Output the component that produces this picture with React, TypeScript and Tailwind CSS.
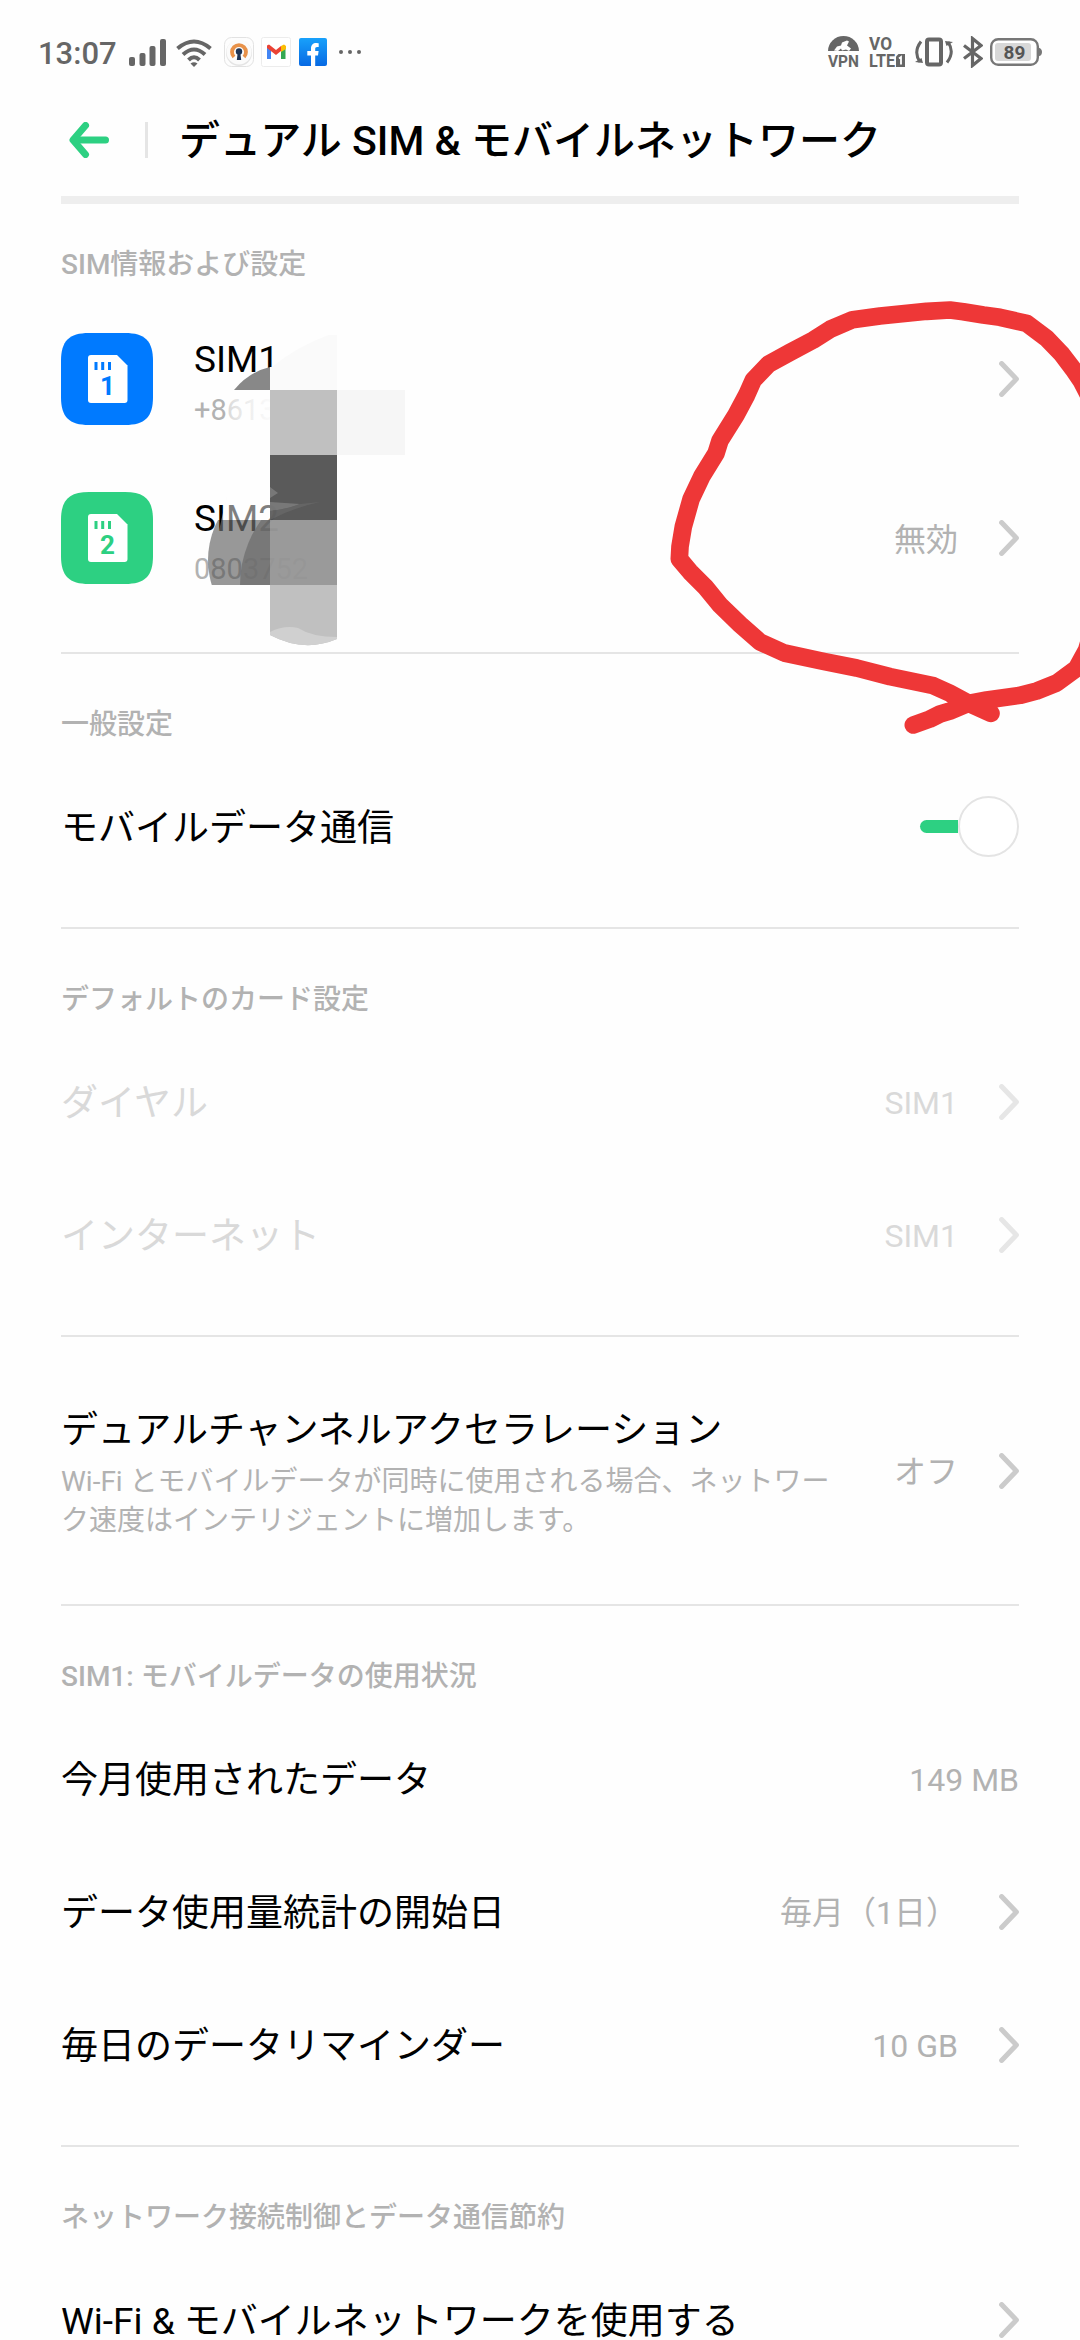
import type { ReactNode } from "react"
import { clsx } from "clsx"

function Chevron({ disabled = false }: { disabled?: boolean }) {
  return (
    <svg
      viewBox="0 0 20 36"
      className={clsx("w-5 h-9 shrink-0", disabled ? "stroke-[#e6e6e6]" : "stroke-[#cbcbcb]")}
      fill="none"
      strokeWidth="5"
      strokeLinecap="round"
      strokeLinejoin="round"
    >
      <path d="M2.6 2.6 17.4 18 2.6 33.4" />
    </svg>
  )
}

function Divider() {
  return <div className="h-0.5 bg-[#e5e5e5]" />
}

function SectionTitle({ children }: { children: ReactNode }) {
  return (
    <div className="h-[106px] pt-[51px]">
      <h2 className="text-[28px] leading-10 font-medium text-[#b2b2b2]">{children}</h2>
    </div>
  )
}

type RowProps = {
  label: string
  value?: string
  arrow?: boolean
  disabled?: boolean
}

function Row({ label, value, arrow = true, disabled = false }: RowProps) {
  return (
    <div className="h-[133px] flex items-center justify-between">
      <span className={clsx("text-[37px] leading-[54px] pt-1", disabled ? "text-[#d9d9d9]" : "text-black")}>
        {label}
      </span>
      <div className="flex items-center gap-[41px]">
        {value && (
          <span className={clsx("text-[32px] leading-[46px] pt-0.5", disabled ? "text-[#d9d9d9]" : "text-[#b2b2b2]")}>
            {value}
          </span>
        )}
        {arrow && <Chevron disabled={disabled} />}
      </div>
    </div>
  )
}

function SimIcon({ slot, color }: { slot: number; color: string }) {
  return (
    <svg viewBox="0 0 92 92" className="w-[92px] h-[92px] shrink-0">
      <path
        fill={color}
        d="M0 46V28C0 8 8 0 28 0H64C84 0 92 8 92 28V64C92 84 84 92 64 92H28C8 92 0 84 0 64Z"
      />
      <path fill="#fff" d="M30 22H56L66.5 32.5V67a3 3 0 0 1-3 3H30a3 3 0 0 1-3-3V25a3 3 0 0 1 3-3Z" />
      <path stroke={color} strokeWidth="3" d="M35 29v8M41.700 29v8M48.500 29v8" />
      <text x="46.500" y="61.500" textAnchor="middle" fill={color} fontSize="26" fontWeight="700" fontFamily="Roboto">
        {slot}
      </text>
    </svg>
  )
}

type SimRowProps = {
  slot: number
  name: string
  phone: string
  color: string
  status?: string
}

function SimRow({ slot, name, phone, color, status }: SimRowProps) {
  return (
    <div className="h-[159px] flex items-center">
      <SimIcon slot={slot} color={color} />
      <div className="ml-[41px] grow pt-2">
        <p className="text-[37px] leading-[54px] text-black">{name}</p>
        <p className="text-[29px] leading-[46px] text-[#b2b2b2]">{phone}</p>
      </div>
      <div className="flex items-center gap-[41px] pt-px">
        {status && <span className="text-[32px] leading-[46px] pt-[3px] text-[#b2b2b2]">{status}</span>}
        <Chevron />
      </div>
    </div>
  )
}

function StatusBar() {
  return (
    <div className="h-[104px] px-[38px] flex items-center justify-between text-[#666]">
      <div className="flex items-center">
        <span className="w-[91px] text-[31px] leading-9 font-medium pt-[3px]">13:07</span>
        <svg viewBox="0 0 38 28" className="w-[38px] h-7 mt-px" fill="#666">
          <rect x="0" y="18" width="6" height="9" rx="2" />
          <rect x="10.500" y="14" width="6" height="13" rx="2" />
          <rect x="20.500" y="7" width="6" height="20" rx="2" />
          <rect x="31" y="0" width="6" height="27" rx="2" />
        </svg>
        <svg viewBox="0 0 36 28" className="w-9 h-7 ml-[9px] mt-px" fill="none" stroke="#666" strokeWidth="4">
          <path d="M1.500 9.500Q18-4.500 34.500 9.500" />
          <path d="M7 15.500Q18 5.500 29 15.500" />
          <path d="M12.500 21Q18 15.500 23.500 21" />
          <path d="M14.500 24.500Q18 22 21.500 24.500L18 28Z" fill="#666" stroke="none" />
        </svg>

        {/* OpenVPN */}
        <svg viewBox="0 0 30 30" className="w-[30px] h-[30px] ml-3" fill="none">
          <rect x=".5" y=".5" width="29" height="29" rx="7" stroke="#e2e2e2" fill="#fdfdfd" />
          <circle cx="15" cy="16" r="13" fill="#e4e4e4" />
          <circle cx="15" cy="15" r="12.500" fill="#fbfbfb" />
          <path d="M10 20A7 7 0 1 1 20 20" stroke="#e8924a" strokeWidth="3.800" />
          <circle cx="15" cy="14.500" r="3.200" fill="#1d3557" />
          <path d="M13.800 15h2.400l1 8h-4.400z" fill="#1d3557" />
        </svg>

        {/* Gmail */}
        <svg viewBox="0 0 30 30" className="w-[30px] h-[30px] ml-[7px]">
          <rect x=".5" y=".5" width="29" height="29" rx="2" fill="#fff" stroke="#ececec" />
          <path d="M6 9v13h4V12z" fill="#4285f4" />
          <path d="M20 12v10h4.500V9z" fill="#34a853" />
          <path d="M6 8.500 8 7.500 15 13l5-4v5l-5 4-9-7z" fill="#ea4335" />
          <path d="M20 9l3-1.500 2 1.500v3l-5 3z" fill="#fbbc04" />
        </svg>

        {/* Facebook */}
        <svg viewBox="0 0 28 28" className="w-7 h-7 ml-2">
          <defs>
            <linearGradient id="fb" x1="0" y1="0" x2="0" y2="1">
              <stop offset="0" stopColor="#18a1fb" />
              <stop offset="1" stopColor="#0769e3" />
            </linearGradient>
          </defs>
          <rect width="28" height="28" rx="2" fill="url(#fb)" />
          <path
            d="M12 28V17.500H8.300V13H12v-2.500C12 7 14 5 17.200 5c1.200 0 2.500.3 2.500.3v3.600h-1.600c-1.400 0-1.900.8-1.900 1.800V13h3.400l-.6 4.500h-2.800V28z"
            fill="#fff"
          />
        </svg>

        <svg viewBox="0 0 24 6" className="w-6 h-1.5 ml-[11px]" fill="#666">
          <circle cx="3" cy="3" r="2" />
          <circle cx="12" cy="3" r="2" />
          <circle cx="21" cy="3" r="2" />
        </svg>
      </div>

      <div className="flex items-center">
        <svg viewBox="0 0 32 32" className="w-8 h-8 mr-[9px] overflow-visible">
          <path d="M0 15a15.500 15 0 0 1 31 0z" fill="#666" />
          <path d="M6 14.500l3-4 4-1 1-3 5-2 2 1-2 4 4 3-2 2.500-3-1.500-4 1-1-2-3 2.500z" fill="#fff" />
          <text
            x="0"
            y="30.500"
            fill="#666"
            fontSize="16.500"
            fontWeight="700"
            fontFamily="Roboto"
            textLength="31"
            lengthAdjust="spacingAndGlyphs"
          >
            VPN
          </text>
        </svg>
        <svg viewBox="0 0 36 32" className="w-9 h-8 mr-[10px] overflow-visible">
          <g fill="#666" fontSize="18" fontWeight="700" fontFamily="Roboto">
            <text x="0" y="14" textLength="23" lengthAdjust="spacingAndGlyphs">VO</text>
            <text x="0" y="31" textLength="26" lengthAdjust="spacingAndGlyphs">LTE</text>
          </g>
          <path d="M29.500 18H36v13h-9V20.500z" fill="#666" />
          <path d="M30 22.500l2-1.500v7.500" fill="none" stroke="#fff" strokeWidth="1.800" />
        </svg>
        <svg viewBox="0 0 38 30" className="w-[38px] h-[30px] mr-[10px]" fill="none" stroke="#666" strokeWidth="3">
          <rect x="12" y="2.500" width="14" height="25" rx="2" strokeWidth="4" />
          <path d="M6 4.500Q-2 15 5 25M32 25.500Q40 15 33 5" />
          <path d="M0 25l8 1-1.500-5zM38 5l-8-1 1.500 5z" fill="#666" stroke="none" />
        </svg>
        <svg viewBox="0 0 20 32" className="w-5 h-8 mr-[7px]" fill="none" stroke="#666" strokeWidth="3.200">
          <path d="M1 9.500 18 22.500 9.500 29.500V2.500L18 9.500 1 22.500" />
        </svg>
        <svg viewBox="0 0 52 28" className="w-[52px] h-7">
          <rect x="1.200" y="1.200" width="46.600" height="25.600" rx="7" fill="#fff" stroke="#777" strokeWidth="2.400" />
          <path d="M48.500 9.500q3.500 1 3.500 4.500t-3.500 4.500z" fill="#777" />
          <rect x="5" y="5" width="36" height="18" rx="3" fill="#d8d8d8" />
          <text x="24.500" y="21" textAnchor="middle" fill="#555" fontSize="19" fontWeight="700" fontFamily="Roboto">
            89
          </text>
        </svg>
      </div>
    </div>
  )
}

// Mosaic brush that hides the phone numbers
function Mosaic() {
  return (
    <svg viewBox="0 0 210 320" className="absolute left-[200px] top-[335px] w-[210px] h-80">
      <defs>
        <linearGradient id="fade" x1="0" y1="0" x2="1" y2="0">
          <stop offset="0" stopColor="#fefefe" stopOpacity=".5" />
          <stop offset=".4" stopColor="#fefefe" stopOpacity=".75" />
          <stop offset="1" stopColor="#fefefe" stopOpacity=".95" />
        </linearGradient>
        <clipPath id="lower">
          <rect x="0" y="185" width="70" height="65" />
        </clipPath>
      </defs>

      {/* SIM1 */}
      <path d="M70 32V55H34Q49 37 70 32Z" fill="#888" />
      <path d="M26 56H70V87H26Z" fill="url(#fade)" />
      <path d="M72 32Q100 9 137 -3V55H70V32Z" fill="#fafafa" />
      <path d="M70 55H137V120H70Z" fill="#c0c0c0" />
      <path d="M137 55H205V120H137Z" fill="#f6f6f6" />

      {/* SIM2 */}
      <path d="M27 160H82V200H18Z" fill="#fefefe" fillOpacity=".5" />
      <path d="M8 200H70V250H8Z" fill="#fefefe" fillOpacity=".3" />
      <g clipPath="url(#lower)">
        <circle cx="93" cy="225" r="85" fill="#000" fillOpacity=".4" />
        <circle cx="150" cy="250" r="110" fill="#707070" fillOpacity=".8" />
      </g>
      <path d="M70 120H137V185H70Z" fill="#484848" fillOpacity=".9" />
      <path d="M70 152 78 158 70 163ZM70 167 100 169Q88 174 70 176Z" fill="#808080" fillOpacity=".8" />
      <path d="M70 176Q88 174 100 169L120 167Q95 172 70 185Z" fill="#6c6c6c" fillOpacity=".6" />
      <path d="M70 185H137V250H70Z" fill="#959595" fillOpacity=".95" />
      <path d="M70 250H137V304Q104 318 70 300Z" fill="#c0c0c0" />
      <path d="M70 297Q84 290 98 293Q112 302 137 302V304Q104 318 70 300Z" fill="#d0d0d0" />
    </svg>
  )
}

// Freehand marker circle drawn around the SIM2 state
function MarkerCircle() {
  return (
    <svg
      viewBox="0 0 1320 1440"
      className="absolute left-[640px] top-[280px] w-[440px] h-[480px]"
      fill="none"
      stroke="#ee3737"
      strokeWidth="53"
      strokeLinecap="round"
      strokeLinejoin="round"
    >
      <path d="M820 1335 870 1317 900 1302 930 1293 985 1270 1040 1260 1140 1246 1190 1233 1250 1209 1310 1165 1340 1110 1400 900V450L1325 305 1300 268 1265 222 1220 175 1160 130 1080 112 1030 105 970 95 930 90 860 94 720 108 638 119 572 147 520 180 450 217 385 253 340 300 320 345 288 405 240 482 228 520 185 590 153 658 130 740 120 800 118 837 150 875 195 920 240 975 300 1033 360 1086 433 1119 550 1144 650 1164 750 1190 880 1217 930 1240 990 1272 1053 1300" />
    </svg>
  )
}

export default function App() {
  return (
    <div className="relative w-[1080px] h-[2340px] overflow-hidden bg-[#fefefe] font-['Roboto','Noto_Sans_CJK_JP',sans-serif]">
      <StatusBar />

      <header className="h-[92px] pl-[69px] flex items-start">
        <svg
          viewBox="0 0 40 36"
          className="w-10 h-9 mt-[18px]"
          fill="none"
          stroke="#2dd082"
          strokeWidth="7"
          strokeLinecap="round"
        >
          <path d="M16.500 3.500 4 18 16.500 32.500" strokeLinejoin="round" />
          <path d="M6 18H36.500" />
        </svg>
        <div className="w-[3px] h-9 ml-9 mt-[18px] bg-[#e5e5e5]" />
        <h1 className="ml-[31px] mt-[7px] text-[41px] leading-[60px] font-medium text-black whitespace-nowrap">
          デュアル SIM &amp; モバイルネットワーク
        </h1>
      </header>

      <main className="mx-[61px]">
        <div className="h-2 bg-[#eee]" />

        <div className="h-[95px] pt-[41px]">
          <h2 className="text-[28px] leading-10 font-medium text-[#b2b2b2]">SIM情報および設定</h2>
        </div>
        <SimRow slot={1} name="SIM1" phone="+8613" color="#007aff" />
        <SimRow slot={2} name="SIM2" phone="0803752" color="#2dd082" status="無効" />
        <div className="h-[35px]" />
        <Divider />

        <SectionTitle>一般設定</SectionTitle>
        <div className="h-[133px] mb-[34px] flex items-center justify-between">
          <span className="text-[37px] leading-[54px] pt-1 text-black">モバイルデータ通信</span>
          <div className="flex items-center">
            <div className="w-[38px] h-[13px] rounded-l-full bg-[#2dd082]" />
            <div className="w-[61px] h-[61px] rounded-full border-2 border-[#e4e4e4] bg-white" />
          </div>
        </div>
        <Divider />

        <SectionTitle>デフォルトのカード設定</SectionTitle>
        <Row label="ダイヤル" value="SIM1" disabled />
        <Row label="インターネット" value="SIM1" disabled />
        <div className="h-[34px]" />
        <Divider />

        <div className="h-[199px] my-[34px] flex items-center justify-between">
          <div className="w-[780px] pt-[3px]">
            <p className="text-[37px] leading-[54px] text-black">デュアルチャンネルアクセラレーション</p>
            <p className="text-[28px] leading-[39px] pt-1 text-[#b2b2b2]">
              Wi-Fi とモバイルデータが同時に使用される場合、ネットワー
              <br />
              ク速度はインテリジェントに増加します。
            </p>
          </div>
          <div className="flex items-center gap-[41px]">
            <span className="text-[32px] leading-[46px] pt-0.5 text-[#b2b2b2]">オフ</span>
            <Chevron />
          </div>
        </div>
        <Divider />

        <SectionTitle>SIM1: モバイルデータの使用状況</SectionTitle>
        <Row label="今月使用されたデータ" value="149 MB" arrow={false} />
        <Row label="データ使用量統計の開始日" value="毎月（1日）" />
        <Row label="毎日のデータリマインダー" value="10 GB" />
        <div className="h-[34px]" />
        <Divider />

        <SectionTitle>ネットワーク接続制御とデータ通信節約</SectionTitle>
        <Row label="Wi-Fi & モバイルネットワークを使用する" />
      </main>

      <Mosaic />
      <MarkerCircle />
    </div>
  )
}
